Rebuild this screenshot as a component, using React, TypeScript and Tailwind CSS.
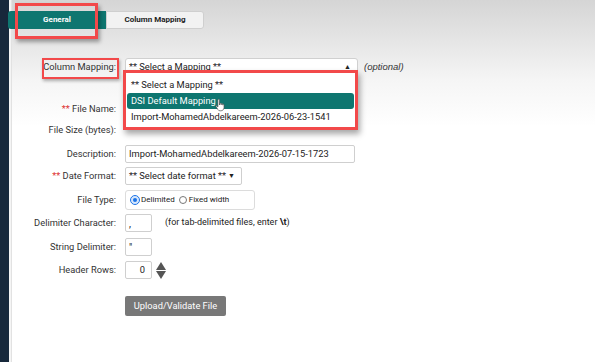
import React from "react"

const font = { fontFamily: "Roboto, 'Liberation Sans', sans-serif" }

function Label({ children, req }: { children: React.ReactNode; req?: boolean }) {
  return (
    <div className="w-[118px] shrink-0 pr-[2px] text-right text-[9.3px] text-[#333]">
      {req && <span className="text-[#d33]">** </span>}
      {children}
    </div>
  )
}

function Hand() {
  // mouse cursor (pointer hand)
  return (
    <svg width="12" height="14" viewBox="0 0 12 14" className="absolute left-[88px] top-[5px]">
      <path
        d="M3.5 1.2c.6 0 1 .4 1 1V7l.1-1.3c.1-.6 1.3-.6 1.4 0l.1 1.2.2-.9c.2-.6 1.2-.5 1.3.1l.1 1 .2-.5c.3-.5 1.1-.3 1.1.3v2.6c0 1.9-1.3 3.3-3.1 3.3H5c-1 0-1.7-.5-2.2-1.3L1.1 8.6c-.3-.5.3-1.1.8-.7l1 1V2.2c0-.6.1-1 .6-1z"
        fill="#fff"
        stroke="#555"
        strokeWidth="0.7"
      />
    </svg>
  )
}

export default function App() {
  return (
    <div
      className="relative flex h-[362px] w-[595px] overflow-hidden bg-white"
      style={font}
    >
      {/* dark side strip */}
      <div className="w-[9px] shrink-0 bg-[#17283b]" />
      <div className="w-[2px] shrink-0 bg-[#f4f4f4]" />
      <div className="w-px shrink-0 bg-[#e2e2e2]" />

      <div className="relative flex-1 bg-gradient-to-b from-[#d5d5d5] via-[#f5f5f5] via-[22%] to-white to-[35%]">
        {/* tabs */}
        <div className="ml-[-4px] mt-[11px] flex h-[18px]">
          <div className="flex w-[98px] items-center justify-center rounded-l-[3px] bg-[#0e7670] text-[8px] font-bold text-white">
            General
          </div>
          <div className="flex w-[98px] items-center justify-center rounded-r-[3px] border border-[#cfcfcf] bg-[#f2f2f2] text-[8px] font-bold text-[#222]">
            Column Mapping
          </div>
        </div>
        {/* highlight around General tab */}
        <div className="absolute left-[3px] top-[3px] h-[36px] w-[83px] border-[3px] border-[#f2494a] shadow-[2px_3px_4px_rgba(0,0,0,0.35)]" />

        <div className="ml-[-12px] flex flex-col">
          {/* Column Mapping */}
          <div className="mt-[28px] flex h-[20px] items-center">
            <Label>Column Mapping:</Label>
            <div className="ml-[7px] flex h-[18px] w-[233px] items-center justify-between whitespace-nowrap rounded-[3px] border border-[#d0d0d0] bg-white pl-[3px] pr-[6px] text-[9.3px] text-[#222]">
              <span>** Select a Mapping **</span>
              <span className="text-[7px] text-[#222]">▲</span>
            </div>
            <span className="ml-[6px] text-[9.5px] italic text-[#333]" style={{ fontFamily: "'Liberation Sans', sans-serif" }}>
              (optional)
            </span>
          </div>

          <div className="mt-[22px] flex h-[20px] items-center">
            <Label req>File Name:</Label>
          </div>
          <div className="mt-[1px] flex h-[20px] items-center">
            <Label>File Size (bytes):</Label>
          </div>

          <div className="mt-[4px] flex h-[20px] items-center">
            <Label>Description:</Label>
            <div className="ml-[7px] flex h-[18px] w-[230px] items-center whitespace-nowrap rounded-[2px] border border-[#cfcfcf] bg-white pl-[3px] text-[9.3px] text-[#222]">
              Import-MohamedAbdelkareem-2026-07-15-1723
            </div>
          </div>

          <div className="mt-[2px] flex h-[20px] items-center">
            <Label req>Date Format:</Label>
            <div className="ml-[7px] flex h-[18px] w-[117px] items-center justify-between whitespace-nowrap rounded-[2px] border border-[#cfcfcf] bg-white pl-[3px] pr-[6px] text-[9.3px] text-[#222]">
              <span>** Select date format **</span>
              <span className="text-[7px]">▼</span>
            </div>
          </div>

          <div className="mt-[3px] flex h-[22px] items-center">
            <Label>File Type:</Label>
            <div className="ml-[7px] flex h-[20px] w-[130px] items-center gap-[4px] whitespace-nowrap rounded-[3px] border border-[#dcdcdc] bg-white pl-[5px] text-[8px] text-[#222]">
              <span className="flex items-center gap-[2px]">
                <span className="inline-block h-[8px] w-[8px] rounded-full border-[2px] border-[#d6e6fb] bg-[#1a73e8] outline outline-1 outline-[#1a73e8]" />
                Delimited
              </span>
              <span className="flex items-center gap-[2px]">
                <span className="inline-block h-[8px] w-[8px] rounded-full border border-[#777] bg-white" />
                Fixed width
              </span>
            </div>
          </div>

          <div className="mt-[2px] flex h-[20px] items-center">
            <Label>Delimiter Character:</Label>
            <div className="ml-[7px] flex h-[18px] w-[27px] items-center rounded-[2px] border border-[#cfcfcf] bg-white pl-[3px] text-[10px] text-[#222]">
              ,
            </div>
            <span className="ml-[13px] whitespace-nowrap text-[9px] text-[#222]">
              (for tab-delimited files, enter <b>\t</b>)
            </span>
          </div>

          <div className="mt-[4px] flex h-[20px] items-center">
            <Label>String Delimiter:</Label>
            <div className="ml-[7px] flex h-[18px] w-[27px] items-center rounded-[2px] border border-[#cfcfcf] bg-white pl-[3px] text-[10px] text-[#222]">
              "
            </div>
          </div>

          <div className="mt-[3px] flex h-[20px] items-center">
            <Label>Header Rows:</Label>
            <div className="ml-[7px] flex h-[18px] w-[27px] items-center justify-end rounded-[2px] border border-[#cfcfcf] bg-white pr-[6px] text-[9.3px] text-[#222]">
              0
            </div>
            <div className="ml-[4px] flex flex-col items-center leading-none">
              <svg width="10" height="8" viewBox="0 0 10 8">
                <path d="M5 0L10 8H0z" fill="#555" />
              </svg>
              <svg width="10" height="8" viewBox="0 0 10 8" className="mt-[1px]">
                <path d="M0 0H10L5 8z" fill="#555" />
              </svg>
            </div>
          </div>

          <div className="mt-[16px] flex">
            <div className="w-[125px] shrink-0" />
            <div className="flex h-[20px] w-[101px] items-center justify-center whitespace-nowrap rounded-[2px] bg-[#787878] text-[9.3px] text-white">
              Upload/Validate File
            </div>
          </div>
        </div>

        {/* highlight around Column Mapping label */}
        <div className="absolute left-[30px] top-[58px] h-[21px] w-[77px] border-[2px] border-[#f2494a] shadow-[1px_2px_3px_rgba(0,0,0,0.3)]" />

        {/* open dropdown list */}
        <div className="absolute left-[111px] top-[70px] h-[60px] w-[235px] border-[3px] border-[#f2494a] bg-white shadow-[2px_4px_6px_rgba(0,0,0,0.35)]">
          <div className="relative flex flex-col whitespace-nowrap pt-[4px] text-[9.3px] text-[#222]">
            <div className="flex h-[16px] items-center pl-[5px]">** Select a Mapping **</div>
            <div className="relative mx-[1px] flex h-[16px] items-center rounded-[3px] bg-[#0e7670] pl-[4px] text-white">
              DSI Default Mapping
              <Hand />
            </div>
            <div className="flex h-[16px] items-center pl-[5px]">Import-MohamedAbdelkareem-2026-06-23-1541</div>
          </div>
        </div>
      </div>
    </div>
  )
}
